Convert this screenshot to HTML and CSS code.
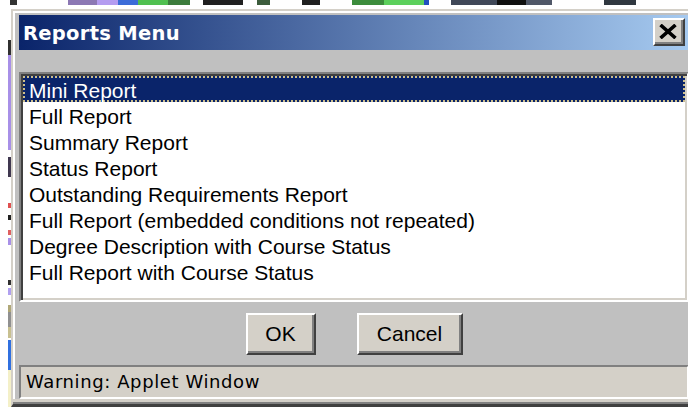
FILE: index.html
```html
<!DOCTYPE html>
<html lang="en">
<head>
<meta charset="utf-8">
<title>Reports Menu</title>
<link rel="stylesheet" href="styles.css">
</head>
<body>
  <div class="desk-top"><div class="desk-top-trace"></div></div>
  <div class="scene">
    <div class="desk-side"><div class="desk-side-trace"></div></div>
    <div class="window">
      <div class="titlebar">
        <span class="title">Reports Menu</span>
        <button class="close" type="button" aria-label="Close">
          <svg width="18" height="15" viewBox="0 0 18 15" aria-hidden="true">
            <path d="M1.5 1 L16.5 14 M16.5 1 L1.5 14" stroke="#000" stroke-width="3.6" fill="none"/>
          </svg>
        </button>
      </div>
      <div class="band"></div>
      <ul class="list">
        <li class="item selected">Mini Report</li>
        <li class="item">Full Report</li>
        <li class="item">Summary Report</li>
        <li class="item">Status Report</li>
        <li class="item">Outstanding Requirements Report</li>
        <li class="item">Full Report (embedded conditions not repeated)</li>
        <li class="item">Degree Description with Course Status</li>
        <li class="item">Full Report with Course Status</li>
      </ul>
      <div class="actions">
        <button class="btn btn-ok" type="button">OK</button>
        <button class="btn btn-cancel" type="button">Cancel</button>
      </div>
      <div class="status">Warning: Applet Window</div>
    </div>
  </div>
</body>
</html>
```
FILE: styles.css
```css
html, body {
  margin: 0;
  padding: 0;
  background: #fff;
  height: 407px;
  overflow: hidden;
}

body {
  width: 688px;
  display: flex;
  flex-direction: column;
}

/* edges of the windows lying behind the dialog */
.desk-top {
  flex: none;
  height: 9px;
  padding-top: 0;
  box-sizing: border-box;
}

.desk-top-trace {
  height: 5px;
  background: linear-gradient(to right,
    transparent 0 10px, #333 10px 17px, transparent 17px 68px,
    #8c78b4 68px 97px, #b49cf0 97px 118px, #3c6cd8 118px 138px,
    #50c050 138px 168px, #3c7c3c 168px 190px, transparent 190px 203px,
    #202020 203px 243px, transparent 243px 257px, #3c5c3c 257px 270px,
    transparent 270px 302px, #202020 302px 320px, transparent 320px 352px,
    #3c8c3c 352px 384px, #5cd05c 384px 424px, #2050c0 424px 429px,
    transparent 429px 451px, #404858 451px 497px, #101010 497px 526px,
    #505868 526px 552px, transparent 552px 604px, #303840 604px 636px,
    transparent 636px);
}

.scene {
  flex: 1;
  display: flex;
  min-height: 0;
  overflow: hidden;
}

.desk-side {
  flex: none;
  width: 11px;
}

.desk-side-trace {
  width: 3px;
  height: 100%;
  margin-left: 8px;
  background: linear-gradient(to bottom,
    transparent 0 31px, #303030 31px 46px, #a890e8 46px 141px,
    transparent 141px 148px, #403850 148px 168px, transparent 168px 194px,
    #e05050 194px 199px, transparent 199px 206px, #202020 206px 211px,
    transparent 211px 221px, #e06060 221px 226px, transparent 226px 229px,
    #a890e8 229px 236px, transparent 236px 271px, #303030 271px 276px,
    transparent 276px 279px, #b0a0f0 279px 286px, transparent 286px 296px,
    #b0a878 296px 303px, #909090 303px 318px, #c8c090 318px 329px,
    transparent 329px 331px, #3070e0 331px 361px, #f4f0c8 361px);
}

/* dialog frame */
.window {
  flex: none;
  width: 686px;
  box-sizing: border-box;
  background: #c0c0c0;
  border-top: 2px solid #d4d0c8;
  border-left: 2px solid #d4d0c8;
  border-bottom: 3px solid #404040;
  padding: 4px 8px 5px 6px;
  box-shadow: inset 0 -2px #808080, inset 0 -5px #d4d0c8, inset 2px 2px #fff;
  display: flex;
  flex-direction: column;
}

.titlebar {
  flex: none;
  height: 35px;
  display: flex;
  align-items: flex-start;
  padding: 0 4px 0 4px;
  background: linear-gradient(to right, #0a246a, #a6caf0);
}

.title {
  font: bold 19.5px "DejaVu Sans", sans-serif;
  letter-spacing: 0.3px;
  color: #fff;
  line-height: 31px;
  padding-top: 3px;
  white-space: nowrap;
}

.close {
  margin-left: auto;
  margin-top: 3px;
  width: 32px;
  height: 28px;
  box-sizing: border-box;
  padding: 0;
  background: #d4d0c8;
  border: 2px solid;
  border-color: #fff #404040 #404040 #fff;
  box-shadow: inset -2px -2px #808080;
  display: flex;
  align-items: center;
  justify-content: center;
}

.close svg {
  display: block;
  margin: 0 2px 1px 0;
}

.band {
  flex: none;
  height: 22px;
}

/* report list */
.list {
  flex: none;
  height: 230px;
  box-sizing: border-box;
  margin: 0;
  padding: 2px;
  list-style: none;
  background: #fff;
  border: 2px solid;
  border-color: #808080 #fff #fff #808080;
  box-shadow: inset 2px 2px #404040, inset -2px -2px #d4d0c8;
}

.item {
  height: 26px;
  box-sizing: border-box;
  padding: 4px 0 0 6px;
  font: 21px "Liberation Sans", Arial, sans-serif;
  line-height: 22px;
  color: #000;
  white-space: nowrap;
}

.item.selected {
  background: #0a246a;
  color: #fff;
  border: 2px dotted #cdbf8c;
  padding: 2px 0 0 4px;
}

/* buttons */
.actions {
  flex: none;
  height: 63px;
  box-sizing: border-box;
  padding-top: 11px;
  display: flex;
  justify-content: center;
  align-items: flex-start;
  gap: 41px;
}

.btn {
  height: 42px;
  box-sizing: border-box;
  padding: 0;
  background: #d4d0c8;
  border: 2px solid;
  border-color: #fff #404040 #404040 #fff;
  box-shadow: inset -2px -2px #808080;
  font: 21px "Liberation Sans", Arial, sans-serif;
  line-height: 36px;
  color: #000;
}

.btn-ok {
  width: 70px;
}

.btn-cancel {
  width: 106px;
}

/* applet warning bar */
.status {
  flex: none;
  height: 34px;
  box-sizing: border-box;
  background: #d4d0c8;
  border-style: solid;
  border-width: 2px;
  border-color: #808080 #fff #fff #808080;
  padding-left: 5px;
  font: 18px "DejaVu Sans", sans-serif;
  letter-spacing: 0.6px;
  line-height: 30px;
  color: #000;
  white-space: nowrap;
}
```
